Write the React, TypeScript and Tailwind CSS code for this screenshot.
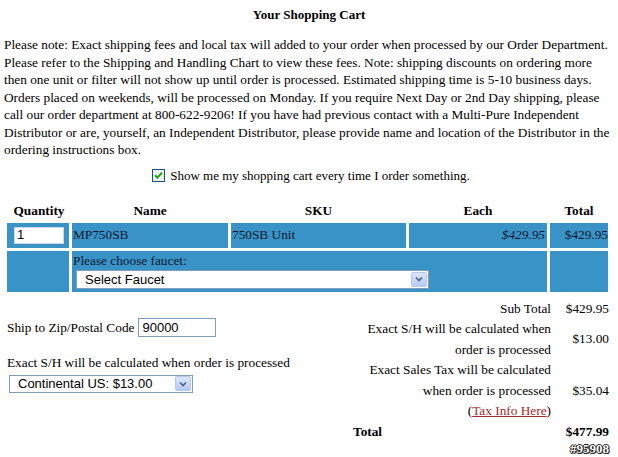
import React from 'react';

const serif = { fontFamily: '"Liberation Serif", "Times New Roman", serif' };

function XpArrow() {
  return (
    <div className="flex h-[15px] w-[16px] shrink-0 items-center justify-center rounded-[2px] border border-[#b5c8f2] bg-gradient-to-b from-[#dbe6fd] to-[#b7cbf5]">
      <svg width="8" height="6" viewBox="0 0 8 6">
        <path d="M1 1.5 L4 4.5 L7 1.5" fill="none" stroke="#4d6185" strokeWidth="1.6" />
      </svg>
    </div>
  );
}

function XpSelect({ label, className }: { label: string; className: string }) {
  return (
    <div
      className={`flex items-center border border-[#7f9db9] bg-white pl-[8px] pr-[1px] font-['Liberation_Sans',Arial,sans-serif] text-[13px] text-black ${className}`}
    >
      <span className="flex-1 leading-none">{label}</span>
      <XpArrow />
    </div>
  );
}

export default function App() {
  return (
    <div className="h-[457px] w-[618px] overflow-hidden bg-white text-black" style={serif}>
      <h1 className="pt-[6px] text-center text-[13px] font-bold leading-[18px]">Your Shopping Cart</h1>

      <p className="mt-[12px] px-[4px] text-[13.3px] leading-[17.5px] whitespace-nowrap">
        Please note: Exact shipping fees and local tax will added to your order when processed by our Order Department.
        <br />
        Please refer to the Shipping and Handling Chart to view these fees. Note: shipping discounts on ordering more
        <br />
        then one unit or filter will not show up until order is processed. Estimated shipping time is 5-10 business days.
        <br />
        Orders placed on weekends, will be processed on Monday. If you require Next Day or 2nd Day shipping, please
        <br />
        call our order department at 800-622-9206! If you have had previous contact with a Multi-Pure Independent
        <br />
        Distributor or are, yourself, an Independent Distributor, please provide name and location of the Distributor in the
        <br />
        ordering instructions box.
      </p>

      <div className="mt-[8px] flex items-center justify-center gap-[5px] pl-[4px] text-[13px] leading-[18px]">
        <svg width="13" height="13" viewBox="0 0 13 13">
          <rect x="0.5" y="0.5" width="12" height="12" fill="#eef0ea" stroke="#1c5180" />
          <path d="M3 6.2 L5.3 8.6 L10 3.8" fill="none" stroke="#21a121" strokeWidth="2" />
        </svg>
        <span>Show me my shopping cart every time I order something.</span>
      </div>

      <table className="mt-[14px] ml-[4px] w-[607px] table-fixed border-separate border-spacing-[3px] text-[13.3px]">
        <colgroup>
          <col className="w-[62px]" />
          <col className="w-[156px]" />
          <col className="w-[175px]" />
          <col className="w-[138px]" />
          <col className="w-[58px]" />
        </colgroup>
        <thead>
          <tr className="h-[18px] leading-[18px]">
            <th className="p-0 pl-[2px]">Quantity</th>
            <th className="p-0">Name</th>
            <th className="p-0">SKU</th>
            <th className="p-0">Each</th>
            <th className="p-0">Total</th>
          </tr>
        </thead>
        <tbody className="text-[#101830]">
          <tr className="h-[25px] bg-[#3993c6]">
            <td className="p-0 pl-[7px]">
              <div className="flex h-[17px] w-[50px] items-center border border-[#c9d9e8] bg-white pl-[2px] font-['Liberation_Sans',Arial,sans-serif] text-[13px] text-black">
                1
              </div>
            </td>
            <td className="p-0 pl-[1px]">MP750SB</td>
            <td className="p-0 pl-[1px]">750SB Unit</td>
            <td className="p-0 pr-[2px] text-right italic">$429.95</td>
            <td className="p-0 text-right">$429.95</td>
          </tr>
          <tr className="h-[41px] bg-[#3993c6]">
            <td className="p-0" />
            <td colSpan={3} className="p-0 pl-[1px] align-top">
              <div className="pt-[1px] leading-[17px]">Please choose faucet:</div>
              <XpSelect label="Select Faucet" className="ml-[3px] mt-[1px] h-[19px] w-[353px]" />
            </td>
            <td className="p-0" />
          </tr>
        </tbody>
      </table>

      <div className="flex text-[13.3px]">
        <div className="w-[330px] pl-[7px]">
          <div className="mt-[23px] flex h-[20px] items-center gap-[4px]">
            <span>Ship to Zip/Postal Code</span>
            <div className="flex h-[19px] w-[78px] items-center border border-[#7f9db9] bg-white pl-[3px] font-['Liberation_Sans',Arial,sans-serif] text-[13px]">
              90000
            </div>
          </div>
          <div className="mt-[16px] leading-[18px]">Exact S/H will be calculated when order is processed</div>
          <XpSelect label="Continental US: $13.00" className="ml-[2px] mt-[3px] h-[18px] w-[184px] pl-[4px]" />
        </div>

        <div className="mt-[4px] flex-1 leading-[20.5px]">
          <div className="flex">
            <div className="flex-1 pr-[9px] text-right">Sub Total</div>
            <div className="w-[58px] pr-[9px] text-right">$429.95</div>
          </div>
          <div className="flex items-center">
            <div className="flex-1 pr-[9px] text-right">
              Exact S/H will be calculated when
              <br />
              order is processed
            </div>
            <div className="w-[58px] pr-[9px] text-right">$13.00</div>
          </div>
          <div className="flex items-center">
            <div className="flex-1 pr-[9px] text-right">
              Exact Sales Tax will be calculated
              <br />
              when order is processed
              <br />
              (<a className="text-[#a52a2a] underline">Tax Info Here</a>)
            </div>
            <div className="w-[58px] pr-[9px] text-right">$35.04</div>
          </div>
          <div className="flex font-bold">
            <div className="flex-1 pl-[23px]">Total</div>
            <div className="w-[58px] pr-[9px] text-right">$477.99</div>
          </div>
          <div className="pr-[9px] text-right text-[13px] font-bold leading-[14px] text-white [text-shadow:1px_0_#222,-1px_0_#222,0_1px_#222,0_-1px_#222,1px_1px_#222]">
            #95908
          </div>
        </div>
      </div>
    </div>
  );
}
